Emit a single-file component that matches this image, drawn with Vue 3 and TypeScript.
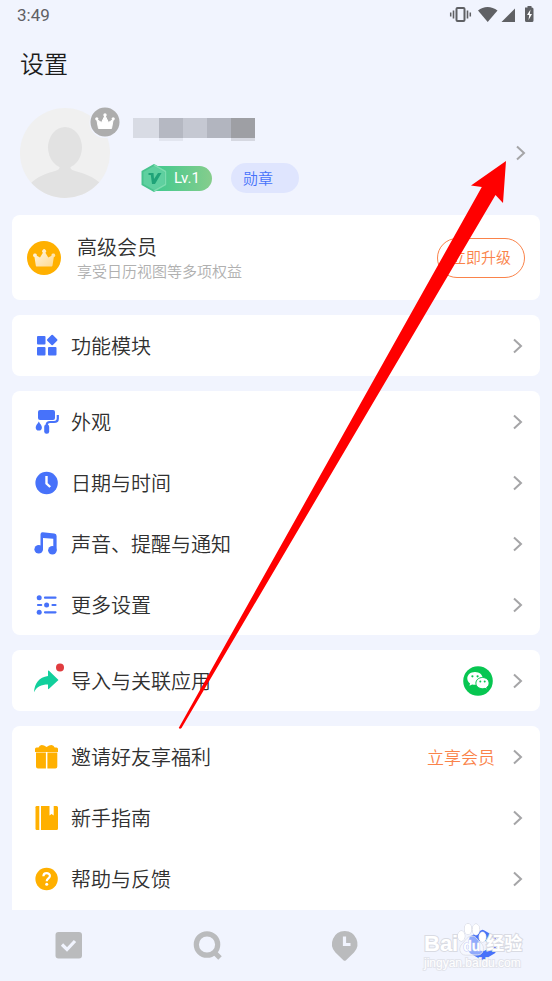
<script setup lang="ts">
type IconName =
  | 'modules' | 'appearance' | 'clock' | 'sound' | 'more'
  | 'share' | 'gift' | 'guide' | 'help'

interface Row {
  icon: IconName
  label: string
  extra?: string
  wechat?: boolean
}

const groups: Row[][] = [
  [{ icon: 'modules', label: '功能模块' }],
  [
    { icon: 'appearance', label: '外观' },
    { icon: 'clock', label: '日期与时间' },
    { icon: 'sound', label: '声音、提醒与通知' },
    { icon: 'more', label: '更多设置' },
  ],
  [{ icon: 'share', label: '导入与关联应用', wechat: true }],
  [
    { icon: 'gift', label: '邀请好友享福利', extra: '立享会员' },
    { icon: 'guide', label: '新手指南' },
    { icon: 'help', label: '帮助与反馈' },
  ],
]
</script>

<template>
  <div class="app">
    <div class="status">
      <span class="time">3:49</span>
      <svg class="status-icons" width="88" height="20" viewBox="0 0 88 20">
        <g fill="none" stroke="#5f6064" stroke-width="2">
          <rect x="7.5" y="3" width="8" height="13" rx="1" />
          <path d="M4.500 5.500v8M18.500 5.500v8" stroke-width="1.600" />
          <path d="M1.700 7.500v4M21.300 7.500v4" stroke-width="1.500" />
        </g>
        <g fill="#5f6064">
          <path d="M29 5.500C34.500.700 42.500.700 48.500 5.500L38.700 17Z" />
          <path d="M66 3.500V17H52.500Z" />
          <path d="M76 2.500h2.500V1h4v1.500H83q1.500 0 1.500 1.500V15.500q0 1.500-1.500 1.500H77.500q-1.500 0-1.500-1.500V2.500Z" />
        </g>
        <path d="M81.500 4.500L78 10h2.200l-.7 5L83 9h-2.200Z" fill="#fff" />
      </svg>
    </div>

    <main class="content">
      <h1 class="title">设置</h1>

      <section class="profile">
        <div class="avatar">
          <svg width="90" height="90" viewBox="0 0 90 90">
            <defs><clipPath id="face"><circle cx="45" cy="45" r="45" /></clipPath></defs>
            <circle cx="45" cy="45" r="45" fill="#f0f0f0" />
            <g clip-path="url(#face)" fill="#e2e2e2">
              <ellipse cx="45" cy="39.500" rx="17" ry="20.500" />
              <path d="M39 56C40.500 61 39 62 35 63C26 65.500 17 68.500 10 76V92H81V76C74 68.500 64 65.500 55 63C51 62 49.500 61 51 56Z" />
            </g>
          </svg>
          <svg class="crown" width="32" height="32" viewBox="0 0 32 32">
            <circle cx="16" cy="16.500" r="15.500" fill="#f1f4fe" />
            <circle cx="16" cy="16" r="14.500" fill="#adadad" />
            <path d="M9.500 22.500L7.800 13.500 12.500 16.500 16 9.500 19.500 16.500 24.200 13.500 22.500 22.500Z" fill="#fff" stroke="#fff" stroke-linejoin="round" />
            <g fill="#fff"><circle cx="16" cy="9" r="1.700" /><circle cx="7.800" cy="12.800" r="1.600" /><circle cx="24.200" cy="12.800" r="1.600" /></g>
          </svg>
        </div>
        <div class="who">
          <svg class="masked" width="122" height="23" viewBox="0 0 122 23" shape-rendering="crispEdges">
            <path d="M0 0h26v20H0z" fill="#d8dbe4" />
            <path d="M26 0h24v20H26z" fill="#b5b8c2" />
            <path d="M50 0h24v20H50z" fill="#c5c8d2" />
            <path d="M74 0h24v20H74z" fill="#b2b5bf" />
            <path d="M98 0h24v20H98z" fill="#9e9fa4" />
            <path d="M26 20h24v3H26z" fill="#e3e6f0" />
            <path d="M98 20h24v3H98z" fill="#d6d8e1" />
          </svg>
          <div class="badges">
            <span class="level">
              <svg width="26" height="30" viewBox="0 0 26 30">
                <path d="M13 2L24.500 8.500V21.500L13 28 1.500 21.500V8.500Z" fill="#5fd0a0" stroke="#48c38e" stroke-width="2" stroke-linejoin="round" />
                <path d="M13 2L24.500 8.500V21.500L13 28" fill="none" stroke="#7bdcae" stroke-width="1.500" stroke-linejoin="round" />
                <path d="M7.500 10H12.500L13 16 17 10H20.500L14 21H11L9.800 12H7.500Z" fill="#1fa378" />
              </svg>
              <span class="level-text">Lv.1</span>
            </span>
            <button class="medal" type="button">勋章</button>
          </div>
        </div>
        <a class="open" href="#profile" aria-label="设置">
          <svg class="chevron" width="10" height="16" viewBox="0 0 10 16"><path d="M1 1.500L8 8 1 14.500" /></svg>
        </a>
      </section>

      <section class="card vip">
        <svg width="34" height="34" viewBox="0 0 34 34">
          <defs>
            <linearGradient id="gold" x1="0" y1="0" x2="1" y2="1">
              <stop offset="0" stop-color="#fff8ea" /><stop offset="1" stop-color="#ffd88a" />
            </linearGradient>
          </defs>
          <circle cx="17" cy="17" r="17" fill="#ffb000" />
          <path d="M9.500 25.500Q9 25.500 8.800 24.500L7.500 16.200A1.900 1.900 0 1 1 9.800 14.800L13 16.500 15.900 11.800A2 2 0 1 1 18.400 11.800L21.300 16.500 24.500 14.800A1.900 1.900 0 1 1 26.800 16.200L25.500 24.500Q25.300 25.500 24.500 25.500Z" fill="url(#gold)" />
        </svg>
        <div class="vip-text">
          <h2>高级会员</h2>
          <p>享受日历视图等多项权益</p>
        </div>
        <button class="upgrade" type="button">立即升级</button>
      </section>

      <section v-for="(rows, g) in groups" :key="g" class="card group">
        <a v-for="row in rows" :key="row.icon" class="row" :href="'#' + row.icon">
          <svg class="icon" width="30" height="30" viewBox="0 0 30 30">
            <g v-if="row.icon === 'modules'" fill="#4772fa">
              <rect x="5" y="5" width="8.500" height="8.500" rx="1" />
              <rect x="5" y="16" width="8.500" height="8.500" rx="1" />
              <rect x="16" y="16" width="8.500" height="8.500" rx="1" />
              <rect x="16.200" y="5" width="8" height="8" rx="1" transform="rotate(45 20.200 9)" />
            </g>
            <g v-else-if="row.icon === 'appearance'" fill="#4772fa">
              <rect x="6" y="3" width="17" height="10" rx="2" />
              <path d="M25.800 8V11.500Q25.800 15 22 15H18Q14.700 15 14.700 18" fill="none" stroke="#4772fa" stroke-width="2.200" />
              <rect x="12.200" y="17.500" width="5" height="9.200" rx="2.300" />
              <path d="M6.800 14.500C8 17 9.900 18.200 9.900 20.400A3.100 3.100 0 0 1 3.700 20.400C3.700 18.200 5.600 17 6.800 14.500Z" />
            </g>
            <g v-else-if="row.icon === 'clock'">
              <circle cx="14.600" cy="15" r="11.200" fill="#4772fa" />
              <path d="M14.500 8V15.500L18.200 19" fill="none" stroke="#fff" stroke-width="2.400" />
            </g>
            <g v-else-if="row.icon === 'sound'" fill="#4772fa">
              <circle cx="6.700" cy="20.300" r="4.300" />
              <circle cx="20.400" cy="21.300" r="4.300" />
              <path d="M8.500 5.500Q8.500 3.200 10.700 3.300L22.300 4.500Q24.600 4.700 24.600 7V21.300H21.300V9.800L11 9V20.300H8.500Z" />
            </g>
            <g v-else-if="row.icon === 'more'" fill="#4772fa">
              <circle cx="7.200" cy="7.700" r="2.500" />
              <circle cx="14.600" cy="15" r="2.500" />
              <circle cx="7.200" cy="22.300" r="2.500" />
              <path d="M13 7.700H23.500M6 15H9.200M20.500 15H23.500M13 22.300H23.500" stroke="#4772fa" stroke-width="2.200" stroke-linecap="round" />
            </g>
            <g v-else-if="row.icon === 'share'">
              <path d="M16 5Q16 4 17 4.800L26.500 14 17 22.800Q16 23.600 16 22.500V18.600C9 18.600 5 20.500 2 26.200C2.700 17 7 11.500 16 10Z" fill="#12cf9c" />
              <circle cx="28" cy="1.500" r="4" fill="#e03c3f" />
            </g>
            <g v-else-if="row.icon === 'gift'" fill="#ffb000">
              <path d="M4.500 5.500H6.500Q7.500 3 9.700 3Q12 3 14.600 5Q17 3 19.500 3Q21.700 3 22.700 5.500H24.500Q26 5.500 26 7V10H3V7Q3 5.500 4.500 5.500Z" />
              <path d="M4 10.500H13.900V26.500H6Q4 26.500 4 24.500ZM15.400 10.500H25.300V24.500Q25.300 26.500 23.300 26.500H15.400Z" />
            </g>
            <g v-else-if="row.icon === 'guide'" fill="#ffb000">
              <path d="M4.700 3H7.300V27H4.700Q3.500 27 3.500 25.800V4.200Q3.500 3 4.700 3Z" />
              <path d="M9 3H17.500V12.500L19.600 11 21.700 12.500V3H24.500Q26 3 26 4.500V25.500Q26 27 24.500 27H9Z" />
            </g>
            <g v-else>
              <circle cx="14.600" cy="15" r="11.200" fill="#ffb000" />
              <path d="M11.400 12.300C11.400 8.200 17.900 8.200 17.900 12.100C17.900 14.400 14.700 14.500 14.700 17.200" fill="none" stroke="#fff" stroke-width="2.200" />
              <circle cx="14.700" cy="20.300" r="1.500" fill="#fff" />
            </g>
          </svg>
          <span class="label">{{ row.label }}</span>
          <span v-if="row.extra" class="extra">{{ row.extra }}</span>
          <svg v-if="row.wechat" class="wechat" width="30" height="30" viewBox="0 0 30 30">
            <circle cx="15" cy="15" r="14.800" fill="#07c651" />
            <path d="M12 6C7.500 6 4.300 8.800 4.300 12.400C4.300 14.500 5.400 16.200 7 17.300L6.500 19.800 9.200 18.400Q10.500 18.800 12 18.800C16.500 18.800 19.700 16 19.700 12.400S16.500 6 12 6Z" fill="#fff" />
            <path d="M19.500 11.500C15.700 11.500 12.900 14 12.900 17.100S15.700 22.700 19.500 22.700Q20.800 22.700 22 22.300L24.200 23.500 23.700 21.400C25.200 20.400 26.100 18.900 26.100 17.100C26.100 14 23.300 11.500 19.500 11.500Z" fill="#fff" stroke="#07c651" />
            <g fill="#07c651"><circle cx="9.400" cy="10.300" r="1.100" /><circle cx="14.600" cy="10.300" r="1.100" /><circle cx="17.300" cy="15.500" r="1" /><circle cx="21.700" cy="15.500" r="1" /></g>
          </svg>
          <svg class="chevron" width="10" height="16" viewBox="0 0 10 16"><path d="M1 1.500L8 8 1 14.500" /></svg>
        </a>
      </section>
    </main>

    <nav class="tabs">
      <a href="#tasks" aria-label="tasks">
        <svg width="30" height="30" viewBox="0 0 30 30">
          <rect x="1.500" y="2" width="26.500" height="26.500" rx="3" fill="#babbbd" />
          <path d="M8 14.500L13 19.500 21 11" fill="none" stroke="#f1f4fe" stroke-width="3.200" />
        </svg>
      </a>
      <a href="#search" aria-label="search">
        <svg width="30" height="30" viewBox="0 0 30 30">
          <circle cx="15" cy="14.500" r="10.700" fill="none" stroke="#babbbd" stroke-width="5.200" />
          <path d="M22 22L28 28" stroke="#babbbd" stroke-width="5" />
        </svg>
      </a>
      <a href="#nearby" aria-label="nearby">
        <svg width="30" height="30" viewBox="0 0 30 30">
          <path d="M14.700 1A12.800 12.800 0 0 1 24 22.500L16 30.200Q14.700 31.400 13.400 30.200L5.400 22.500A12.800 12.800 0 0 1 14.700 1Z" fill="#babbbd" />
          <path d="M14.500 6.500V14.500H20.500" fill="none" stroke="#f1f4fe" stroke-width="3.200" />
        </svg>
      </a>
      <a href="#settings" aria-label="settings">
        <svg width="30" height="30" viewBox="0 0 30 30">
          <path d="M13.300.200Q14.600-.500 15.900.200L26.500 6.200Q27.700 7 27.700 8.300V21.500Q27.700 22.800 26.500 23.500L15.900 29.700Q14.600 30.400 13.300 29.700L2.500 23.500Q1.300 22.800 1.300 21.500V8.300Q1.300 7 2.500 6.200Z" fill="#4772fa" />
          <circle cx="14.500" cy="15.500" r="5.500" fill="#f1f4fe" />
        </svg>
      </a>
    </nav>

    <div class="watermark">
      <div class="brand">
        <span>Bai</span>
        <span class="paw">
          <svg width="30" height="34" viewBox="0 0 30 34">
            <g fill="#fff" stroke="#d0d3de" stroke-width="1">
              <ellipse cx="4.300" cy="14" rx="3.500" ry="5" />
              <ellipse cx="11" cy="7" rx="3.500" ry="5.500" />
              <ellipse cx="19" cy="7.500" rx="3.500" ry="5.500" />
              <ellipse cx="25.500" cy="15" rx="3.500" ry="5" />
            </g>
            <path d="M15 14C19 14 20 17.500 24 21C28 24.500 27 33 20.500 33H8.500C2 33 1.500 25 5.500 21.500C9 18 11 14 15 14Z" fill="#fff" fill-opacity="0.400" stroke="#d9dbe3" />
          </svg>
          <span class="du">du</span>
        </span>
        <span class="cn">经验</span>
      </div>
      <div class="url">jingyan.baidu.com</div>
    </div>

    <svg class="pointer" width="330" height="570" viewBox="178 160 330 570">
      <path d="M506 161L503 203 495.500 195 181.500 728Q180 729.500 178.700 728L481.800 187 471 185.500Z" fill="#f00" />
    </svg>
  </div>
</template>

<style>
body {
  background: #f1f4fe;
}
</style>

<style scoped>
.app {
  position: relative;
  display: flex;
  flex-direction: column;
  height: 100vh;
  overflow: hidden;
  background: #f1f4fe;
  color: #303030;
  font-family: Roboto, "Noto Sans CJK SC", sans-serif;
  font-weight: 350;
}
a {
  color: inherit;
  text-decoration: none;
}
h1, h2, p {
  margin: 0;
  font-weight: inherit;
}
button {
  padding: 0;
  font: inherit;
  cursor: pointer;
}
svg {
  display: block;
  flex: none;
}
.status {
  display: flex;
  align-items: center;
  justify-content: space-between;
  flex: none;
  height: 30px;
  padding: 0 15px 0 17px;
}
.time {
  color: #5f6064;
  font-size: 17px;
  font-weight: 400;
}
.content {
  flex: 1;
  min-height: 0;
  padding: 0 12px;
  overflow-y: auto;
  scrollbar-width: none;
}
.title {
  padding: 17px 8px;
  font-size: 24px;
  line-height: 36px;
  color: #1c1c1c;
}
.profile {
  display: flex;
  height: 115px;
  padding: 8px 14px 0 8px;
  box-sizing: border-box;
}
.avatar {
  position: relative;
  width: 90px;
}
.crown {
  position: absolute;
  top: -2px;
  right: -11px;
}
.who {
  flex: 1;
  padding: 10px 0 0 23px;
}
.badges {
  display: flex;
  align-items: center;
  gap: 19px;
  margin: 22px 0 0 8px;
}
.level {
  display: flex;
  align-items: center;
  width: 71px;
  height: 30px;
}
.level svg {
  z-index: 1;
}
.level-text {
  flex: 1;
  margin-left: -13px;
  padding-left: 20px;
  border-radius: 0 13px 13px 0;
  background: linear-gradient(90deg, #3fc98f, #86cd8c);
  color: #fff;
  font-size: 15px;
  font-weight: 400;
  line-height: 25px;
}
.medal {
  width: 68px;
  height: 30px;
  padding: 0 14px 2px 0;
  border: 0;
  border-radius: 15px;
  background: #dfe5fe;
  color: #4772fa;
  font-size: 15px;
}
.open {
  padding-top: 37px;
}
.chevron path {
  fill: none;
  stroke: #a5a5a7;
  stroke-width: 2;
}
.card {
  margin-bottom: 15px;
  background: #fff;
  border-radius: 8px;
}
.vip {
  display: flex;
  align-items: center;
  height: 85px;
  padding: 0 15px;
}
.vip-text {
  flex: 1;
  padding-left: 16px;
}
.vip-text h2 {
  font-size: 20px;
  line-height: 28px;
}
.vip-text p {
  color: #b0b0b0;
  font-size: 15px;
  line-height: 20px;
}
.upgrade {
  width: 88px;
  height: 40px;
  padding-bottom: 2px;
  border: 1px solid #fa834a;
  border-radius: 20px;
  background: none;
  color: #fa834a;
  font-size: 15px;
}
.group:last-child {
  padding-bottom: 20px;
}
.row {
  display: flex;
  align-items: center;
  height: 61px;
  padding: 0 17px 0 20px;
}
.icon {
  overflow: visible;
}
.label {
  flex: 1;
  padding-left: 9px;
  font-size: 20px;
}
.extra {
  margin-right: 18px;
  color: #fa834a;
  font-size: 17px;
}
.wechat {
  margin-right: 20px;
}
.tabs {
  display: grid;
  grid-template-columns: repeat(4, 1fr);
  flex: none;
  height: 71px;
  padding-bottom: 2px;
  box-sizing: border-box;
  background: #f1f4fe;
}
.tabs a {
  display: flex;
  align-items: center;
  justify-content: center;
}
.tabs svg {
  overflow: visible;
}
.watermark {
  position: absolute;
  right: 28px;
  bottom: 11px;
  width: 100px;
  color: #fff;
  white-space: nowrap;
  pointer-events: none;
}
.brand {
  display: flex;
  align-items: flex-end;
  height: 36px;
  font: 700 22px/24px "Liberation Sans", "Noto Sans CJK SC", sans-serif;
  -webkit-text-stroke: 2px #d9dbe3;
  paint-order: stroke fill;
}
.paw {
  position: relative;
  margin: 0 -1px;
}
.du {
  position: absolute;
  left: 6px;
  bottom: 0;
  font-size: 14px;
  line-height: 20px;
  -webkit-text-stroke: 1px #b9c6f4;
}
.cn {
  font-size: 18px;
}
.url {
  font: 400 12px/14px "Liberation Sans", sans-serif;
  -webkit-text-stroke: 2px #e2e4ec;
  paint-order: stroke fill;
}
.pointer {
  position: absolute;
  top: 160px;
  left: 178px;
  pointer-events: none;
}
</style>
